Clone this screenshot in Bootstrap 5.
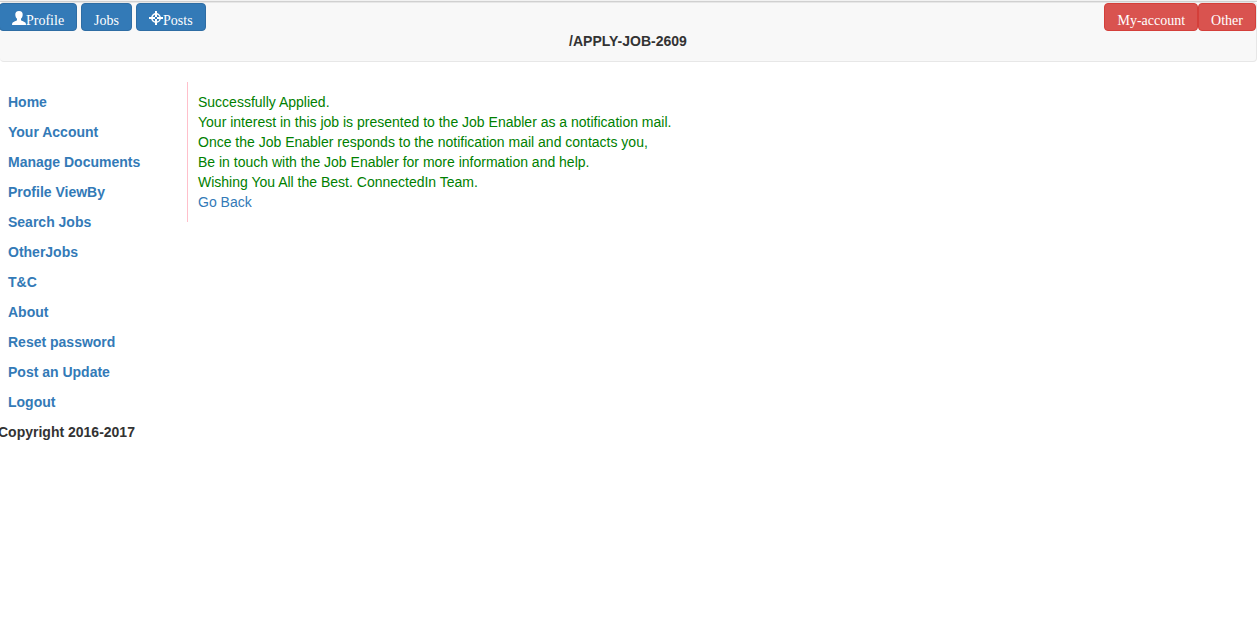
<!DOCTYPE html>
<html lang="en">
<head>
<meta charset="utf-8">
<meta name="viewport" content="width=device-width, initial-scale=1">
<title>Apply Job</title>
<link href="https://cdn.jsdelivr.net/npm/bootstrap@5.3.0/dist/css/bootstrap.min.css" rel="stylesheet">
<style>
body { font-family: "Liberation Sans", Arial, sans-serif; font-size: 14px; line-height: 20px; color: #333; border-top: 1px solid #f2f2f2; }
a { color: #337ab7; text-decoration: none; }
a:hover { text-decoration: underline; }
.topbar { background: #f8f8f8; border: 1px solid #e7e7e7; border-left: 0; border-radius: 4px; margin-bottom: 20px; padding-bottom: 10px; }
.top-rule { border-top: 1px solid #d0d0d0; }
.topbar .btn { font-family: "Liberation Serif", "Times New Roman", serif; font-size: 14px; line-height: 18px; padding: 8px 12px 0; border-radius: 4px; color: #fff; }
.topbar .btn-primary { background: #337ab7; border-color: #2e6da4; }
.topbar .btn-danger { background: #d9534f; border-color: #d43f3a; }
.left-buttons { margin-left: -1px; }
.glyph { width: 14px; height: 14px; margin-top: -4px; vertical-align: baseline; }
.sidebar { width: 187px; }
.sidebar .nav-link { color: #337ab7; padding: 0 8px; }
.sidebar .nav { gap: 10px; padding-top: 10px; }
.copyright { margin: 10px 0 0 -2px; }
.message { border-left: 1px solid pink; padding: 10px; color: green; }
</style>
</head>
<body>
<header class="top-rule">
  <nav class="topbar">
    <div class="d-flex justify-content-between">
      <div class="left-buttons d-flex gap-1">
        <button type="button" class="btn btn-primary"><svg class="glyph" viewBox="0 0 14 14" aria-hidden="true"><path fill="#fff" d="M7 0C4.400 0 3.200 1.500 3.300 3.700C3.400 5.500 4.100 6.900 5 7.800V9.300C4.500 10 1.500 10.800.7 11.600C.2 12.100 0 13 0 14H14C14 13 13.800 12.100 13.300 11.600C12.500 10.800 9.500 10 9 9.300V7.800C9.900 6.900 10.600 5.500 10.700 3.700C10.800 1.500 9.600 0 7 0Z"/></svg>Profile</button>
        <button type="button" class="btn btn-primary">Jobs</button>
        <button type="button" class="btn btn-primary"><svg class="glyph" viewBox="0 0 14 14" aria-hidden="true"><g fill="none" stroke="#fff"><circle cx="7" cy="7" r="4.200" stroke-width="1.400"/><path stroke-width="2" d="M7 0V6M7 8V14M0 7H6M8 7H14"/></g></svg>Posts</button>
      </div>
      <div class="d-flex">
        <button type="button" class="btn btn-danger">My-account</button>
        <button type="button" class="btn btn-danger">Other</button>
      </div>
    </div>
    <div class="text-center fw-bold">/APPLY-JOB-2609</div>
  </nav>
</header>
<div class="d-flex align-items-start">
  <aside class="sidebar flex-shrink-0 fw-bold">
    <nav class="nav flex-column">
      <a class="nav-link" href="#">Home</a>
      <a class="nav-link" href="#">Your Account</a>
      <a class="nav-link" href="#">Manage Documents</a>
      <a class="nav-link" href="#">Profile ViewBy</a>
      <a class="nav-link" href="#">Search Jobs</a>
      <a class="nav-link" href="#">OtherJobs</a>
      <a class="nav-link" href="#">T&amp;C</a>
      <a class="nav-link" href="#">About</a>
      <a class="nav-link" href="#">Reset password</a>
      <a class="nav-link" href="#">Post an Update</a>
      <a class="nav-link" href="#">Logout</a>
    </nav>
    <p class="copyright">Copyright 2016-2017</p>
  </aside>
  <main class="message">
    Successfully Applied.<br>
    Your interest in this job is presented to the Job Enabler as a notification mail.<br>
    Once the Job Enabler responds to the notification mail and contacts you,<br>
    Be in touch with the Job Enabler for more information and help.<br>
    Wishing You All the Best. ConnectedIn Team.<br>
    <a href="#">Go Back</a>
  </main>
</div>
<script src="https://cdn.jsdelivr.net/npm/bootstrap@5.3.0/dist/js/bootstrap.bundle.min.js"></script>
</body>
</html>
